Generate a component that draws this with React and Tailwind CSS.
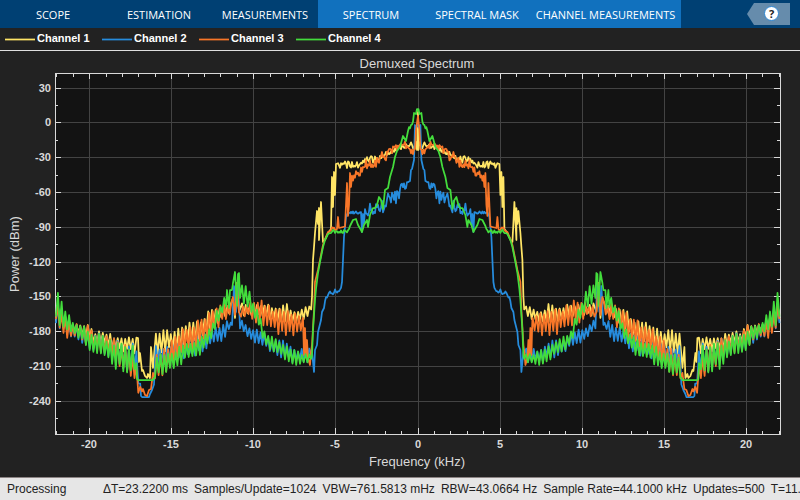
import { useMemo, useState } from 'react'

const TABS = [
  { label: 'SCOPE' },
  { label: 'ESTIMATION' },
  { label: 'MEASUREMENTS' },
  { label: 'SPECTRUM', contextual: true },
  { label: 'SPECTRAL MASK', contextual: true },
  { label: 'CHANNEL MEASUREMENTS', contextual: true, wide: true },
]

const STATUS = [
  'ΔT=23.2200 ms',
  'Samples/Update=1024',
  'VBW=761.5813 mHz',
  'RBW=43.0664 Hz',
  'Sample Rate=44.1000 kHz',
  'Updates=500',
  'T=11.',
]

// Plot area inside the chart's own coordinate system
const BOX = { left: 55, right: 780, top: 73, bottom: 434 }
const CENTER = 418
const MIRROR = 417.7

const xPos = (khz) => Math.floor(CENTER + khz * 16.42)
const yPos = (dbm) => Math.round(122.4 - dbm * 1.16)

// Left half of each trace as [x, upper, lower]; the spectrum mirrors around 0 kHz.
// A point with a single level is drawn as is, a pair is filled with ripple.
const CHANNELS = [
  {
    name: 'Channel 1',
    color: '#ffe566',
    points: [
      [56, 295, 315], [60, 310, 326], [66, 318, 330], [73, 322, 333], [88, 324, 340], [95, 331, 344],
      [105, 330, 346], [113, 335, 350], [120, 336, 352], [130, 336, 352], [136, 337, 356],
      [138, 338], [139, 362], [140, 353], [142, 371], [143, 370], [145, 376], [147, 378], [148, 374],
      [150, 378], [151, 347], [153, 368], [154, 333, 360], [163, 329, 352], [175, 329, 352], [182, 327, 349],
      [187, 321, 344], [200, 320, 340], [208, 310, 332], [220, 304, 322], [230, 306, 313], [233, 298],
      [235, 318], [237, 283], [239, 312], [242, 303, 316], [250, 305, 316], [263, 303, 317],
      [280, 306, 326], [286, 302, 321], [293, 311, 324], [300, 309, 322], [308, 301, 320], [311, 308, 313],
      [312, 297], [313, 260], [314, 247], [315, 233], [317, 211], [318, 224], [319, 208], [319, 240],
      [321, 202], [322, 223], [323, 242], [325, 240], [328, 233], [331, 229], [332, 177], [333, 207],
      [334, 172], [335, 195], [336, 164], [338, 162, 170], [345, 160, 168], [361, 162, 168],
      [366, 157, 164], [372, 155, 163], [382, 155, 160], [389, 149, 155], [397, 145, 151], [407, 142, 149],
      [414, 142, 149], [416, 142], [417, 150], [418, 112],
    ],
  },
  {
    name: 'Channel 2',
    color: '#268cdd',
    points: [
      [56, 298, 324], [60, 302, 332], [66, 318, 334], [73, 321, 338], [77, 325, 342], [90, 329, 350],
      [105, 334, 354], [115, 336, 362], [120, 339, 368], [128, 340, 372], [136, 345, 374], [139, 365, 388],
      [141, 396], [142, 397], [149, 397], [150, 394], [152, 390], [154, 362, 386], [156, 345, 366],
      [170, 344, 364], [180, 343, 362], [190, 339, 358], [200, 333, 355], [207, 331, 348],
      [215, 326, 346], [222, 324, 342], [227, 321, 339], [230, 320, 327], [232, 325], [234, 286],
      [236, 312], [238, 283], [239, 302], [240, 319, 331], [246, 323, 336], [250, 327, 341], [262, 329, 346],
      [272, 337, 354], [286, 340, 360], [292, 347, 363], [300, 349, 362], [308, 346, 366], [312, 352],
      [314, 372], [315, 350], [317, 345], [318, 332], [321, 320], [322, 312], [324, 308], [325, 301, 306],
      [327, 293, 300], [330, 290, 296], [336, 289, 294], [341, 286, 290], [342, 282], [343, 260],
      [344, 237], [346, 217], [348, 212], [350, 211, 214], [361, 211, 214], [362, 232], [363, 214],
      [364, 224], [365, 205, 217], [375, 202, 214], [385, 199, 212], [388, 191, 204], [396, 191, 205],
      [401, 184, 195], [406, 182, 189], [410, 181], [411, 170], [412, 169], [414, 160], [415, 125],
      [416, 128], [418, 124],
    ],
  },
  {
    name: 'Channel 3',
    color: '#f87628',
    points: [
      [56, 300, 320], [60, 306, 330], [67, 318, 341], [73, 322, 337], [88, 325, 346], [95, 332, 350],
      [110, 336, 356], [120, 341, 368], [125, 343, 370], [130, 350, 378], [136, 355, 384], [138, 378, 396],
      [141, 389, 394], [143, 389], [145, 395], [147, 396], [149, 390], [151, 389], [153, 370, 392],
      [156, 350, 380], [162, 350, 378], [170, 341, 370], [180, 331, 356], [185, 325, 354], [190, 325, 351],
      [200, 318, 348], [210, 308, 338], [220, 303, 326], [230, 304, 316], [233, 297], [235, 315],
      [237, 283], [239, 312], [241, 305, 320], [250, 302, 317], [255, 303, 325], [263, 300, 327],
      [270, 305, 330], [280, 307, 336], [290, 311, 337], [300, 314, 336], [303, 318], [304, 355],
      [305, 328], [306, 356], [307, 340], [308, 358], [310, 365], [311, 352], [312, 345], [314, 310],
      [315, 282], [318, 270], [320, 260], [323, 245], [325, 239], [328, 232], [331, 226, 231],
      [337, 226, 231], [338, 217], [339, 228], [345, 226, 231], [346, 205], [347, 183], [348, 216],
      [349, 205], [350, 173], [351, 187], [352, 172, 184], [358, 170, 182], [361, 166, 177],
      [366, 160, 169], [375, 158, 168], [383, 151, 165], [390, 147, 157], [398, 143, 152], [405, 141, 149],
      [409, 146, 152], [413, 148, 156], [415, 149], [416, 130], [418, 116],
    ],
  },
  {
    name: 'Channel 4',
    color: '#43dd3c',
    points: [
      [56, 288, 318], [59, 290, 324], [62, 301, 333], [66, 312, 333], [70, 315, 331], [75, 323, 335],
      [80, 324, 340], [85, 325, 344], [88, 329, 352], [100, 332, 354], [105, 335, 359], [111, 339, 363],
      [115, 341, 370], [120, 342, 370], [128, 344, 378], [134, 345, 373], [136, 350, 378], [137, 379],
      [138, 380], [153, 380], [154, 378], [155, 355, 379], [162, 354, 376], [170, 351, 371],
      [176, 347, 368], [182, 345, 364], [190, 341, 359], [200, 337, 356], [207, 330, 347], [212, 324, 339],
      [216, 310, 330], [220, 304, 318], [223, 297, 314], [226, 294, 312], [227, 290], [229, 308],
      [230, 290], [232, 290], [233, 283], [235, 272], [237, 306], [238, 274], [239, 273], [240, 298],
      [242, 283, 302], [247, 287, 308], [250, 291, 312], [253, 301, 315], [256, 305, 325], [260, 314, 329],
      [262, 324, 337], [266, 333, 346], [270, 334, 352], [280, 340, 356], [285, 345, 362], [298, 350, 366],
      [305, 353, 364], [310, 353, 366], [312, 356], [313, 330], [315, 300], [316, 289], [318, 273],
      [320, 262], [323, 247], [325, 240], [328, 234], [330, 230, 234], [337, 229, 233], [348, 229, 233],
      [350, 226], [353, 220], [356, 219], [358, 225], [361, 230], [362, 232], [364, 225], [367, 220],
      [368, 227], [370, 215], [373, 208], [375, 208], [377, 205], [379, 197], [381, 200], [383, 209],
      [385, 190], [388, 188], [390, 177], [393, 167], [395, 157], [397, 151], [400, 147], [403, 136],
      [406, 141], [408, 131], [409, 125, 131], [412, 123, 131], [414, 113], [416, 114], [417, 109], [418, 109],
    ],
  },
]

const X_MAJOR = [-20, -15, -10, -5, 0, 5, 10, 15, 20]
const X_MINOR = Array.from({ length: 45 }, (_, i) => i - 22).filter((v) => v % 5 !== 0)
const Y_MAJOR = [30, 0, -30, -60, -90, -120, -150, -180, -210, -240]
const Y_MINOR = [15, -15, -45, -75, -105, -135, -165, -195, -225, -255]

// Outside the pass band the ripple is an even comb, inside it is plain noise
const COMB_END = 312
const COMB_STEP = 1.87

// Small repeatable generator so that the ripple is the same on every render
const createRandom = (seed) => {
  let state = seed
  return () => {
    state = (state * 16807) % 2147483647
    return state / 2147483647
  }
}

const buildTrace = (points, seed) => {
  const random = createRandom(seed)
  const half = []
  let flip = false
  let cursor = 0

  points.forEach(([x, upper, lower = upper], i) => {
    const next = points[i + 1]
    if (!next || lower === upper) {
      half.push([x, upper])
      cursor = x + 1
      return
    }
    const [nextX, nextUpper, nextLower = nextUpper] = next
    const comb = x < COMB_END
    cursor = Math.max(cursor, x)
    while (cursor < nextX) {
      const t = (cursor - x) / (nextX - x)
      const top = upper + (nextUpper - upper) * t
      const height = lower + (nextLower - lower) * t - top
      if (comb) {
        const inset = random() * height * 0.25
        half.push([cursor, flip ? top + inset : top + height - inset])
      } else {
        half.push([cursor, top + random() * height])
      }
      flip = !flip
      cursor += comb ? COMB_STEP : 1
    }
  })

  const mirrored = half.slice(0, -1).reverse().map(([x, y]) => [MIRROR * 2 - x, y])
  return [...half, ...mirrored].map(([x, y]) => `${x.toFixed(1)},${y.toFixed(1)}`).join(' ')
}

const Toolstrip = () => {
  const [active, setActive] = useState('SPECTRUM')

  return (
    <header className="flex h-7 bg-[#004073] font-['Open_Sans',sans-serif] text-[11px] text-white">
      <nav className="flex">
        {TABS.map((tab) => (
          <button
            key={tab.label}
            type="button"
            aria-pressed={active === tab.label}
            onClick={() => setActive(tab.label)}
            className={`h-7 whitespace-nowrap pt-0.5 ${tab.wide ? 'w-[151px]' : 'w-[106px]'} ${
              tab.contextual ? 'bg-[#1171be]' : ''
            }`}
          >
            {tab.label}
          </button>
        ))}
      </nav>
      <button type="button" aria-label="Help" className="ml-auto mr-2.5">
        <svg width="43" height="22" viewBox="0 0 43 22">
          <polygon points="0,11 7,0 43,0 43,22 7,22" fill="#668cac" />
          <circle cx="24.5" cy="10.5" r="7" fill="#fff" stroke="#2f87d2" strokeWidth="1" />
          <text x="24.5" y="14.5" textAnchor="middle" fontSize="11" fontWeight="700" fill="#222">
            ?
          </text>
        </svg>
      </button>
    </header>
  )
}

const Legend = () => (
  <ul className="flex h-[23px] gap-[15px] border-b border-[#e0e0e0] pl-[5px] text-[11px] font-bold text-white">
    {CHANNELS.map((channel) => (
      <li key={channel.name} className="flex w-[82px] items-center gap-0.5 whitespace-nowrap pb-0.5">
        <svg width="30" height="4" viewBox="0 0 30 4" className="mt-0.5 shrink-0">
          <line x1="0" x2="30" y1="2.5" y2="2.5" stroke={channel.color} strokeWidth="1.75" />
        </svg>
        {channel.name}
      </li>
    ))}
  </ul>
)

const Axes = () => {
  const { left, right, top, bottom } = BOX

  return (
    <g fill="none" stroke="#d9d9d9" shapeRendering="crispEdges">
      <rect x={left + 0.5} y={top + 0.5} width={right - left} height={bottom - top} />
      {X_MAJOR.map((v) => (
        <path key={v} d={`M${xPos(v) + 0.5} ${top}v6M${xPos(v) + 0.5} ${bottom}v-6`} />
      ))}
      {X_MINOR.map((v) => (
        <path key={v} d={`M${xPos(v) + 0.5} ${top}v4M${xPos(v) + 0.5} ${bottom}v-3`} />
      ))}
      {Y_MAJOR.map((v) => (
        <path key={v} d={`M${left} ${yPos(v) + 0.5}h6M${right} ${yPos(v) + 0.5}h-6`} />
      ))}
      {Y_MINOR.map((v) => (
        <path key={v} d={`M${left} ${yPos(v) + 0.5}h3M${right} ${yPos(v) + 0.5}h-3`} />
      ))}
    </g>
  )
}

const SpectrumChart = () => {
  const traces = useMemo(
    () => CHANNELS.map((c, i) => ({ ...c, line: buildTrace(c.points, 4211 * (i + 3)) })),
    []
  )
  const { left, right, top, bottom } = BOX

  return (
    <svg viewBox="0 51 800 426" className="block w-full" role="img" aria-label="Demuxed Spectrum">
      <rect x={left} y={top} width={right - left} height={bottom - top} fill="#131313" />

      {/* Grid */}
      <g stroke="#434343" shapeRendering="crispEdges">
        {X_MAJOR.map((v) => (
          <line key={v} x1={xPos(v) + 0.5} x2={xPos(v) + 0.5} y1={top} y2={bottom} />
        ))}
        {Y_MAJOR.map((v) => (
          <line key={v} x1={left} x2={right} y1={yPos(v) + 0.5} y2={yPos(v) + 0.5} />
        ))}
      </g>

      <Axes />

      {/* Traces */}
      <g fill="none" strokeWidth="1.75" strokeLinejoin="round">
        {traces.map((trace) => (
          <polyline key={trace.name} points={trace.line} stroke={trace.color} />
        ))}
      </g>

      {/* Labels */}
      <g fill="#d9d9d9" fontSize="11" fontWeight="700">
        {X_MAJOR.map((v) => (
          <text key={v} x={xPos(v)} y="448" textAnchor="middle">
            {v}
          </text>
        ))}
        {Y_MAJOR.map((v) => (
          <text key={v} x="51" y={yPos(v) + 4} textAnchor="end">
            {v}
          </text>
        ))}
      </g>
      <g fill="#d9d9d9" fontSize="13" textAnchor="middle">
        <text x="417" y="68">Demuxed Spectrum</text>
        <text x="417" y="466">Frequency (kHz)</text>
        <text x="19" y="254" transform="rotate(-90 19 254)">Power (dBm)</text>
      </g>
    </svg>
  )
}

const StatusBar = () => (
  <footer className="mt-auto flex h-[23px] items-center overflow-hidden whitespace-nowrap border-t border-[#8c8484] bg-[#e6e6e6] pl-[7px] text-[12px] text-[#222]">
    <span className="w-24 shrink-0">Processing</span>
    <div className="flex gap-1.5">
      {STATUS.map((item) => (
        <span key={item}>{item}</span>
      ))}
    </div>
  </footer>
)

const App = () => (
  <div className="flex min-h-screen flex-col bg-[#222222] font-['Liberation_Sans',Arial,sans-serif]">
    <Toolstrip />
    <Legend />
    <SpectrumChart />
    <StatusBar />
  </div>
)

export default App
